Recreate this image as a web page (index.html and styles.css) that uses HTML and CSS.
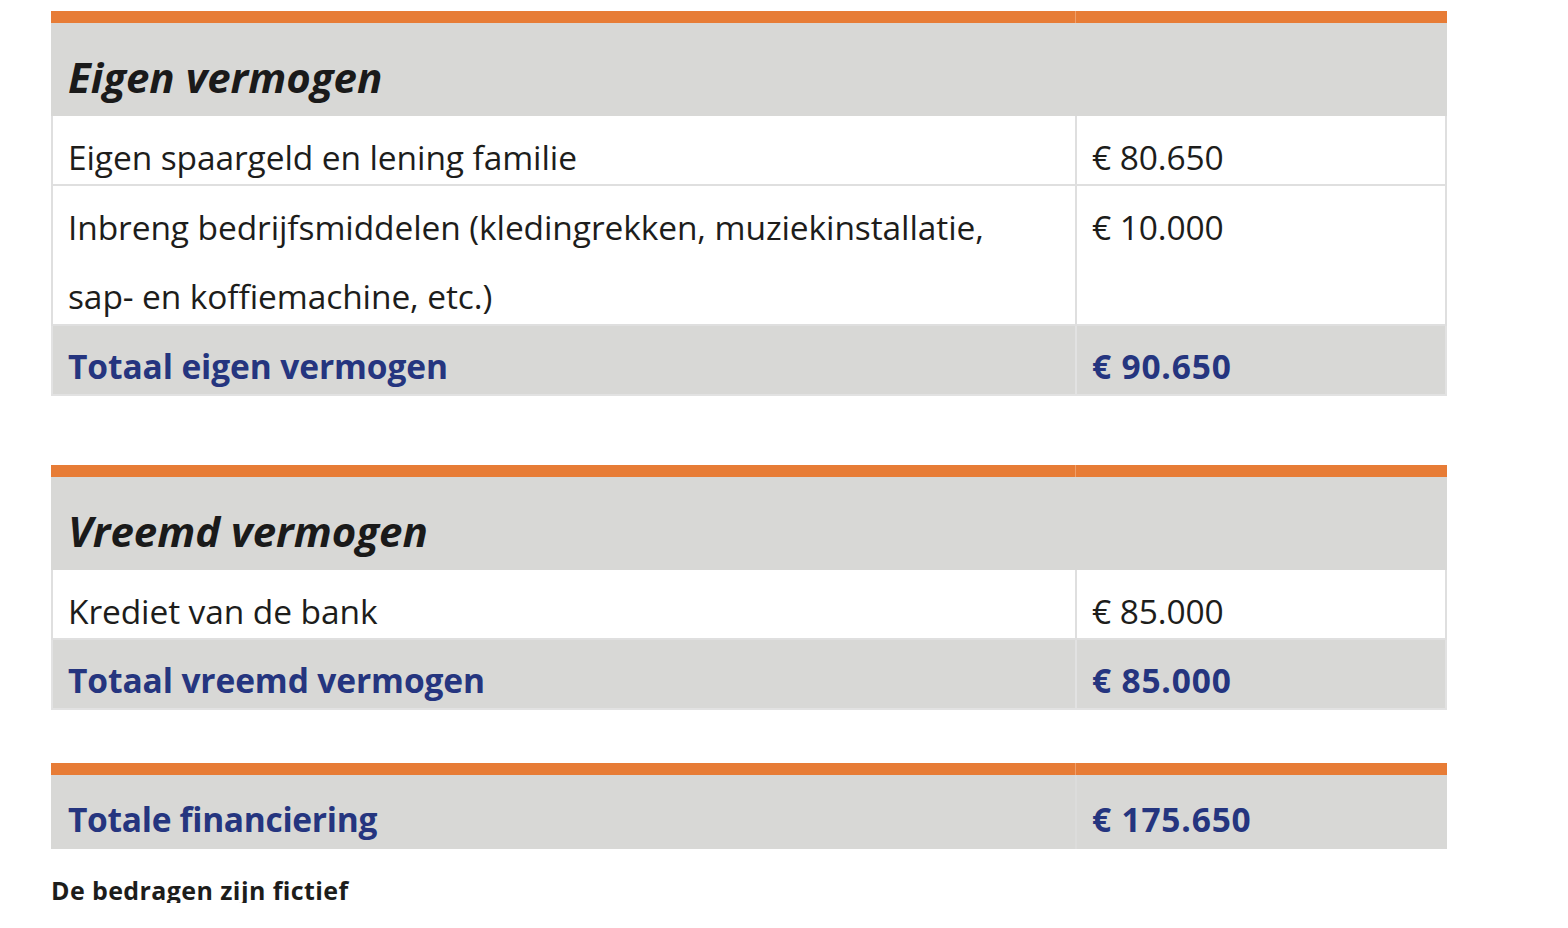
FILE: index.html
```html
<!DOCTYPE html>
<html lang="nl">
<head>
<meta charset="utf-8">
<title>Financiering</title>
<link rel="stylesheet" href="styles.css">
</head>
<body>
<div class="page">
  <section class="fin">
    <div class="bar"><span></span><span></span></div>
    <div class="head">Eigen vermogen</div>
    <div class="row"><div class="cell">Eigen spaargeld en lening familie</div><div class="cell val">€ 80.650</div></div>
    <div class="row tall"><div class="cell">Inbreng bedrijfsmiddelen (kledingrekken, muziekinstallatie,<br>sap- en koffiemachine, etc.)</div><div class="cell val">€ 10.000</div></div>
    <div class="row total"><div class="cell">Totaal eigen vermogen</div><div class="cell val">€ 90.650</div></div>
  </section>
  <section class="fin second">
    <div class="bar"><span></span><span></span></div>
    <div class="head">Vreemd vermogen</div>
    <div class="row"><div class="cell">Krediet van de bank</div><div class="cell val">€ 85.000</div></div>
    <div class="row total"><div class="cell">Totaal vreemd vermogen</div><div class="cell val">€ 85.000</div></div>
  </section>
  <section class="fin third">
    <div class="bar"><span></span><span></span></div>
    <div class="row grand"><div class="cell">Totale financiering</div><div class="cell val">€ 175.650</div></div>
  </section>
  <p class="note">De bedragen zijn fictief</p>
</div>
</body>
</html>
```
FILE: styles.css
```css
body {
  margin: 0;
  background: #ffffff;
  font-family: "Open Sans", "Noto Sans", sans-serif;
  color: #1d1d1b;
}
.page {
  padding: 11px 0 0 51px;
  width: 1396px;
}
.fin {
  width: 1396px;
}
.fin.second {
  margin-top: 69px;
}
.fin.third {
  margin-top: 53px;
}
.bar {
  display: grid;
  grid-template-columns: 1024px 372px;
  height: 12px;
}
.bar span {
  background: #e77c36;
}
.bar span + span {
  border-left: 1px solid #ef9f6a;
}
.head {
  height: 93px;
  box-sizing: border-box;
  background: #d8d8d6;
  padding: 7px 17px 0;
  font-size: 42px;
  font-style: italic;
  font-weight: 700;
  line-height: 93px;
  letter-spacing: 0;
  color: #1a1a1a;
}
.row {
  display: grid;
  grid-template-columns: 1024px 372px;
  grid-template-rows: 70px;
}
.row.tall {
  grid-template-rows: 140px;
}
.cell {
  box-sizing: border-box;
  border-left: 2px solid #dfdfdf;
  border-bottom: 2px solid #dfdfdf;
  padding: 7px 15px 0;
  font-size: 33.5px;
  line-height: 69px;
  letter-spacing: -0.1px;
  white-space: nowrap;
}
.cell.val {
  border-right: 2px solid #dfdfdf;
}
.row.total,
.row.grand {
  background: #d8d8d6;
}
.row.total .cell,
.row.grand .cell {
  border-color: #e2e2e2;
  padding-top: 6px;
  font-weight: 700;
  color: #25357f;
}
.row.total .cell.val,
.row.grand .cell.val {
  letter-spacing: 0.8px;
}
.row.grand {
  grid-template-rows: 74px;
}
.row.grand .cell {
  border-bottom: 0;
  border-left-color: #d8d8d6;
  border-right-color: #d8d8d6;
  padding-top: 10px;
  letter-spacing: -0.3px;
}
.row.grand .cell.val {
  border-left-color: #dcdcdb;
}
.note {
  margin: 29px 0 0;
  font-size: 25px;
  line-height: 25px;
  font-weight: 700;
  letter-spacing: 0.4px;
  color: #1d1d1b;
}
```
